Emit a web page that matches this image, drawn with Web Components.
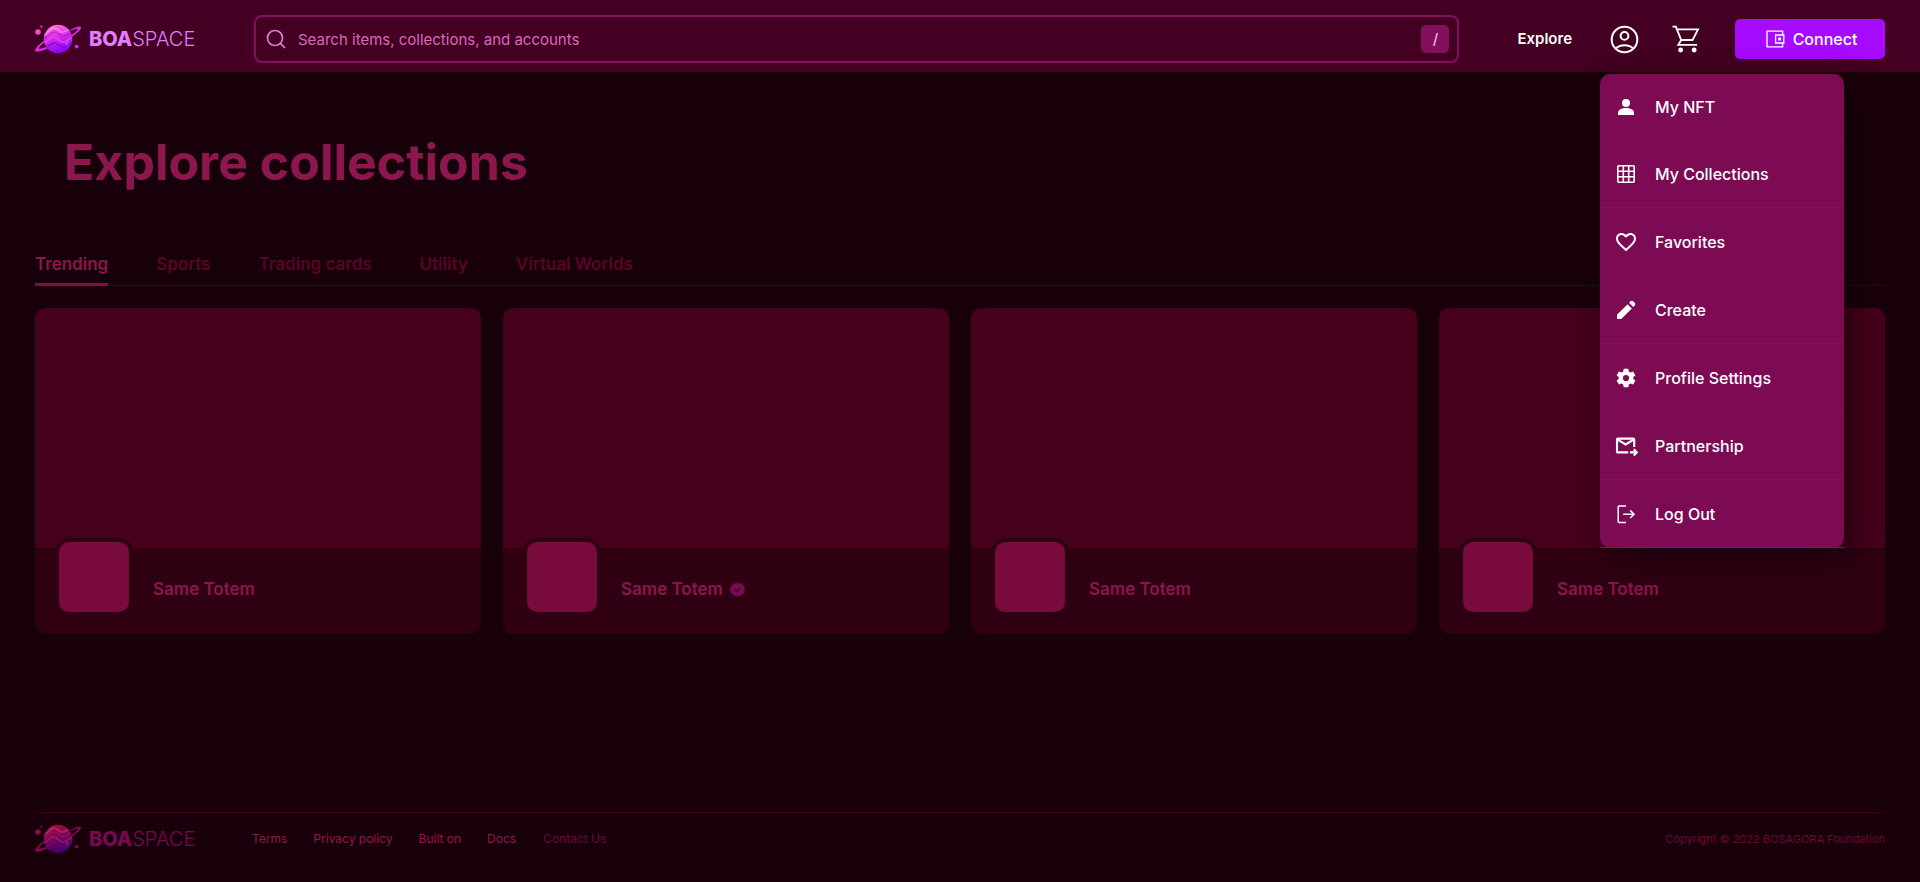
<!DOCTYPE html>
<html lang="en">
<head>
<meta charset="utf-8">
<meta name="viewport" content="width=device-width, initial-scale=1">
<title>BOASPACE - Explore collections</title>
<style>
  :root {
    --page: #18000a;
    --bar: #430022;
    --line: #83105c;
    --menu: #7c0b53;
    --media: #46001c;
    --card: #2f0012;
    --avatar: #780b3b;
    --accent: #8c164e;
    --gutter: 35px;
  }
  body {
    margin: 0;
    background: var(--page);
    color: #fff;
    font-family: Inter, "Liberation Sans", sans-serif;
  }
</style>
</head>
<body>
<boa-app></boa-app>

<script>
const define = (name, html, setup) => {
  const template = document.createElement('template');
  template.innerHTML = '<style>*{box-sizing:border-box}a{color:inherit;text-decoration:none}button{font:inherit;color:inherit;border:0;padding:0;background:none;cursor:pointer}</style>' + html;
  customElements.define(name, class extends HTMLElement {
    constructor() {
      super();
      this.attachShadow({ mode: 'open' }).append(template.content.cloneNode(true));
    }
    connectedCallback() {
      if (setup) setup(this, this.shadowRoot);
    }
  });
};

const icons = {
  search: '<g fill="none" stroke="currentColor" stroke-width="1.7"><circle cx="11" cy="11" r="7.5"/><path d="M16.4 16.4 21 21"/></g>',
  account: '<g fill="none" stroke="currentColor" stroke-width="1.7"><circle cx="12" cy="12" r="10.6"/><circle cx="12" cy="9" r="3.2"/><path d="M4.6 19.6C6.5 17.600 9 16.700 12 16.700s5.500.9 7.400 2.900"/></g>',
  cart: '<g fill="none" stroke="currentColor" stroke-width="1.6"><path d="M.4 1.4h2.9l4.6 11.5h9.7l4.7-9.2H4.2M7.9 12.900 5.400 17h16.100"/></g><circle cx="7.4" cy="21.4" r="2.1" fill="currentColor"/><circle cx="19" cy="21.4" r="2.1" fill="currentColor"/>',
  wallet: '<g fill="none" stroke="currentColor" stroke-width="1.3"><path d="M19.6 8V4.2H4v15.6h15.6V16"/><path d="M12.6 8h8.2v8h-8.2z"/></g><path d="M15.2 10.6H18v2.8h-2.8z" fill="currentColor"/>',
  person: '<circle cx="12" cy="8" r="4" fill="currentColor"/><path d="M4 20v-2.2C4 14.6 8 13 12 13s8 1.600 8 4.800V20z" fill="currentColor"/>',
  grid: '<g fill="none" stroke="currentColor" stroke-width="1.6"><rect x="3.800" y="3.800" width="16.400" height="16.400" rx="1"/><path d="M9.300 4v16M14.700 4v16M4 9.300h16M4 14.700h16"/></g>',
  heart: '<path fill="currentColor" d="M16.500 3c-1.740 0-3.410.81-4.500 2.090C10.910 3.810 9.240 3 7.500 3 4.420 3 2 5.420 2 8.500c0 3.780 3.400 6.860 8.550 11.540L12 21.350l1.450-1.320C18.600 15.360 22 12.280 22 8.500 22 5.420 19.580 3 16.500 3zm-4.400 15.550l-.1.1-.1-.1C7.140 14.240 4 11.390 4 8.500 4 6.500 5.500 5 7.500 5c1.540 0 3.040.99 3.570 2.360h1.870C13.460 5.990 14.960 5 16.500 5c2 0 3.500 1.500 3.500 3.500 0 2.890-3.140 5.740-7.900 10.050z"/>',
  pencil: '<path fill="currentColor" d="M19.300 8.925l-4.250-4.200 1.400-1.400q.575-.575 1.413-.575t1.412.575l1.400 1.400q.575.575.6 1.388t-.55 1.387L19.300 8.925ZM17.850 10.400L7.250 21H3v-4.250l10.600-10.600 4.250 4.250Z"/>',
  gear: '<path fill="currentColor" fill-rule="evenodd" d="M9.700 2.800h4.600l.5 2.700 1.700 1 2.600-.9 2.300 4-2.100 1.500v1.800l2.100 1.600-2.300 3.900-2.600-.9-1.700 1-.5 2.700H9.700l-.5-2.700-1.700-1-2.600.9-2.300-3.900 2.100-1.600v-1.800L2.600 9.600l2.300-4 2.600.9 1.700-1zM12 8.900a3.100 3.100 0 1 0 0 6.200 3.100 3.100 0 0 0 0-6.200z"/>',
  mail: '<g fill="none" stroke="currentColor" stroke-width="2.100"><path d="M14.200 18.400H4q-1 0-1-1V5.600q0-1 1-1h15.200q1 0 1 1V13"/><path d="m3.600 5.600 8 4.900 8-4.900M16 18.400h6.600M19.800 15.200l3 3.200-3 3.200"/></g>',
  logout: '<g fill="none" stroke="currentColor" stroke-width="1.500"><path d="M12 4H5.200q-1 0-1 1v14.400q0 1 1 1H12M9.200 12.200h10.600M16.200 8.400l3.800 3.800-3.800 3.800"/></g>',
  verified: '<path fill="currentColor" stroke="currentColor" d="m12 1 2.600 2 3.200-.8 1.400 3 3.200 1.100-.3 3.300L24 12l-1.900 2.400.3 3.300-3.200 1.100-1.400 3-3.200-.8L12 23l-2.600-2-3.200.8-1.400-3-3.200-1.100.3-3.300L0 12l1.900-2.400-.3-3.300 3.200-1.100 1.400-3 3.200.8z"/><path d="m7.500 12 3.200 3.200 6-6.200" fill="none" stroke="#2f0012" stroke-width="2.200"/>'
};

define('boa-icon', `
  <style>
    :host { display: block; flex: none; width: var(--size, 24px); height: var(--size, 24px); }
    svg { display: block; width: 100%; height: 100%; overflow: visible; }
  </style>
  <svg viewBox="0 0 24 24" aria-hidden="true"></svg>`,
  (host, root) => { root.querySelector('svg').innerHTML = icons[host.getAttribute('name')] || ''; });

define('boa-logo', `
  <style>
    :host { display: block; flex: none; width: 160px; color: #e27dfb; --a: #ff6fd8; --b: #d52be6; --c: #8a00ff; --dot: #f549d5; --wave: .6; }
    :host([dim]) { color: #78084f; --a: #a30a42; --b: #7f0650; --c: #3a0068; --dot: #8c0a4c; --wave: .2; }
    a { display: flex; align-items: center; gap: 7px; font-size: 20px; line-height: 30px; white-space: nowrap; }
    svg { flex: none; width: 47px; height: 30px; }
    b { font-weight: 800; }
    span { font-weight: 300; }
    .a { stop-color: var(--a); } .b { stop-color: var(--b); } .c { stop-color: var(--c); }
    .dot { fill: var(--dot); } .dot2 { fill: var(--b); }
    .waves { opacity: var(--wave); }
  </style>
  <a href="#" aria-label="BOASPACE">
    <svg viewBox="0 0 47 30" aria-hidden="true">
      <defs>
        <linearGradient id="ball" x1=".35" y1="0" x2=".6" y2="1">
          <stop offset="0" class="a"/><stop offset=".45" class="b"/><stop offset="1" class="c"/>
        </linearGradient>
        <linearGradient id="ring" x1="0" y1="1" x2="1" y2="0">
          <stop offset="0" class="b"/><stop offset="1" class="b"/>
        </linearGradient>
        <clipPath id="disc"><circle cx="23" cy="15" r="14.200"/></clipPath>
      </defs>
      <path fill="url(#ring)" d="M34.500 6.200C40 3.200 45.400 1.600 46 3c.7 2-4 6.500-9.500 10.200l-.6-1.800c4-2.700 7-5.600 6.800-6.500-.3-.8-4.100.4-7.200 2z"/>
      <path fill="url(#ring)" d="M9.200 16.600C4 20.400-.4 25 .1 27c.6 1.800 7.300 0 13.300-3l-1.600-1.500c-4 1.700-7.300 2.800-7.700 2-.4-.9 2.400-3.800 5.800-6.400z"/>
      <circle cx="23" cy="15" r="14.200" fill="url(#ball)"/>
      <g class="waves" clip-path="url(#disc)" fill="none">
        <path d="M7 12c6 0 6-8 12-8 5 0 5 5 9 4s5-4 10-3" stroke="#ff9be6" stroke-width="1.800"/>
        <path d="M7 15c6 0 7-7 12-7s6 5 10 4 5-4 10-3" stroke="#b414d8" stroke-width="1.600"/>
        <path d="M7 19c6 1 7-7 12-6s5 6 10 5 4-5 10-4" stroke="#f04cf0" stroke-width="1.800"/>
        <path d="M8 24c6 0 8-6 12-5s5 5 9 4 4-4 9-4" stroke="#7a00dd" stroke-width="1.800"/>
      </g>
      <ellipse class="waves" cx="32" cy="19.400" rx="1.200" ry="2.400" transform="rotate(28 32 19.400)" fill="#b977ff"/>
      <circle class="dot" cx="3" cy="8" r="2.800"/>
      <circle class="dot" cx="6.400" cy="2.600" r="1.100"/>
      <circle class="dot2" cx="41.700" cy="22.600" r="1.900"/>
    </svg>
    <div><b>BOA</b><span>SPACE</span></div>
  </a>`);

define('boa-search', `
  <style>
    :host { display: block; flex: 1; min-width: 0; }
    label { display: flex; align-items: center; height: 48px; padding: 0 8px; border: 2px solid var(--line); border-radius: 8px; color: #e27cca; }
    boa-icon { margin-right: 8px; }
    input { flex: 1; min-width: 0; height: 32px; padding: 0 2px; border: 0; outline: 0; background: none; color: inherit; font: 400 15px/20px Inter, sans-serif; }
    input::placeholder { color: #d968bd; opacity: 1; }
    kbd { width: 28px; height: 28px; border-radius: 5px; background: var(--line); color: #f3b5e4; font: 500 15px/28px Inter, sans-serif; text-align: center; }
  </style>
  <label><boa-icon name="search"></boa-icon><input type="search" aria-label="Search" placeholder="Search items, collections, and accounts"><kbd>/</kbd></label>`);

define('boa-menu-item', `
  <style>
    :host { display: block; border-bottom: 1px solid var(--line); }
    a { display: flex; align-items: center; gap: 17px; height: 67px; padding: 0 14px; font-size: 16px; line-height: 24px; font-weight: 500; }
    :host(:first-child) a { height: 65px; }
  </style>
  <a href="#" role="menuitem"><boa-icon></boa-icon><slot></slot></a>`,
  (host, root) => {
    const icon = root.querySelector('boa-icon');
    icon.setAttribute('name', host.getAttribute('icon'));
    icon.connectedCallback();
  });

define('boa-account', `
  <style>
    :host { display: block; position: relative; flex: none; width: 48px; height: 48px; }
    button { display: grid; place-items: center; width: 48px; height: 48px; }
    button boa-icon { --size: 29px; }
    nav { position: absolute; z-index: 5; left: 0; top: 59px; width: 244px; border-radius: 10px; background: var(--menu); box-shadow: 10px 10px 30px rgba(20, 0, 8, .75); }
  </style>
  <button aria-label="Account" aria-haspopup="menu" aria-expanded="true"><boa-icon name="account"></boa-icon></button>
  <nav role="menu" aria-label="Account">
    <boa-menu-item icon="person">My NFT</boa-menu-item>
    <boa-menu-item icon="grid">My Collections</boa-menu-item>
    <boa-menu-item icon="heart">Favorites</boa-menu-item>
    <boa-menu-item icon="pencil">Create</boa-menu-item>
    <boa-menu-item icon="gear">Profile Settings</boa-menu-item>
    <boa-menu-item icon="mail">Partnership</boa-menu-item>
    <boa-menu-item icon="logout">Log Out</boa-menu-item>
  </nav>`);

define('boa-header', `
  <style>
    :host { display: block; background: var(--bar); }
    header { display: flex; align-items: center; height: 72px; padding: 6px var(--gutter) 0; }
    boa-search { margin: 0 58px 0 59px; }
    .explore { margin-right: 28px; font-size: 15px; line-height: 20px; font-weight: 600; }
    .cart { display: grid; place-items: center; width: 48px; height: 48px; margin: 0 25px 0 14px; }
    .cart boa-icon { --size: 28px; }
    .connect { display: flex; align-items: center; justify-content: center; gap: 6px; width: 150px; height: 40px; border-radius: 5px; background: #a60aff; font-size: 16px; line-height: 24px; font-weight: 500; }
  </style>
  <header>
    <boa-logo></boa-logo>
    <boa-search></boa-search>
    <a class="explore" href="#">Explore</a>
    <boa-account></boa-account>
    <button class="cart" aria-label="Cart"><boa-icon name="cart"></boa-icon></button>
    <button class="connect"><boa-icon name="wallet"></boa-icon>Connect</button>
  </header>`);

define('boa-tab', `
  <style>
    :host { display: block; margin-bottom: -1px; color: #5a0326; }
    button { display: block; padding: 0 0 7px; border-bottom: 3px solid transparent; font-size: 17px; line-height: 24px; font-weight: 600; }
    :host([selected]) { color: var(--accent); }
    :host([selected]) button { border-color: #7d0f43; }
  </style>
  <button role="tab"><slot></slot></button>`,
  (host, root) => root.querySelector('button').setAttribute('aria-selected', host.hasAttribute('selected')));

define('boa-tabs', `
  <style>
    :host { display: block; border-bottom: 1px solid #3d001c; }
    div { display: flex; gap: 48px; }
  </style>
  <div role="tablist"><slot></slot></div>`);

define('boa-card', `
  <style>
    :host { display: block; min-width: 0; overflow: hidden; border-radius: 10px; background: var(--card); }
    .media { height: 240px; background: var(--media); }
    .info { display: flex; align-items: flex-end; gap: 20px; height: 86px; padding: 0 20px 18px; }
    .avatar { flex: none; width: 78px; height: 78px; border: 4px solid var(--card); border-radius: 14px; background: var(--avatar); }
    h2 { display: flex; align-items: center; gap: 7px; margin: 0 0 15px; font-size: 17px; line-height: 24px; font-weight: 600; color: var(--accent); }
    boa-icon { --size: 15px; color: #780a56; }
    :host(:not([verified])) boa-icon { display: none; }
  </style>
  <article>
    <div class="media"></div>
    <div class="info">
      <div class="avatar"></div>
      <h2><slot></slot><boa-icon name="verified"></boa-icon></h2>
    </div>
  </article>`);

define('boa-footer', `
  <style>
    :host { display: block; margin: 0 var(--gutter); border-top: 1px solid #3d001c; }
    footer { display: flex; align-items: center; height: 69px; padding-bottom: 18px; font-size: 12px; line-height: 16px; }
    nav { display: flex; gap: 26px; margin-left: 57px; color: #96154f; }
    nav a:last-child { margin-left: 1px; color: #6f073f; }
    small { margin-left: auto; font-size: 11px; color: #6b0735; }
  </style>
  <footer>
    <boa-logo dim></boa-logo>
    <nav aria-label="Footer">
      <a href="#">Terms</a><a href="#">Privacy policy</a><a href="#">Built on</a><a href="#">Docs</a><a href="#">Contact Us</a>
    </nav>
    <small>Copyright © 2022 BOSAGORA Foundation</small>
  </footer>`);

define('boa-app', `
  <style>
    :host { display: flex; flex-direction: column; min-height: 100vh; }
    main { flex: 1; padding: 0 var(--gutter); }
    h1 { margin: 0; padding: 60px 29px; font-size: 50px; line-height: 60px; font-weight: 700; color: var(--accent); }
    .grid { display: grid; grid-template-columns: repeat(4, 1fr); gap: 22px; margin: 22px 0; }
  </style>
  <boa-header></boa-header>
  <main>
    <h1>Explore collections</h1>
    <boa-tabs>
      <boa-tab selected>Trending</boa-tab>
      <boa-tab>Sports</boa-tab>
      <boa-tab>Trading cards</boa-tab>
      <boa-tab>Utility</boa-tab>
      <boa-tab>Virtual Worlds</boa-tab>
    </boa-tabs>
    <div class="grid">
      <boa-card>Same Totem</boa-card>
      <boa-card verified>Same Totem</boa-card>
      <boa-card>Same Totem</boa-card>
      <boa-card>Same Totem</boa-card>
    </div>
  </main>
  <boa-footer></boa-footer>`);
</script>
</body>
</html>
